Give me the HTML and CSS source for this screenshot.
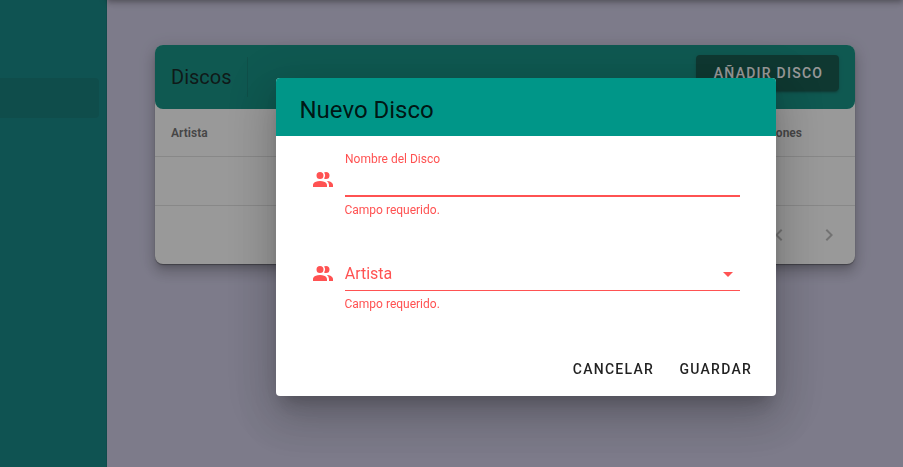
FILE: index.html
```html
<!DOCTYPE html>
<html lang="es">
<head>
<meta charset="utf-8">
<title>Discos</title>
<link rel="stylesheet" href="styles.css">
</head>
<body>
<div class="app">
  <nav class="sidebar"><div class="nav-item"></div></nav>
  <main class="content">
    <div class="app-bar"></div>
    <section class="card">
      <header class="toolbar">
        <h1 class="toolbar-title">Discos</h1>
        <span class="divider"></span>
        <button class="btn btn-add">Añadir Disco</button>
      </header>
      <div class="row head"><span>Artista</span><span class="actions">Acciones</span></div>
      <div class="row body-row"></div>
      <footer class="pager">
        <svg class="icon" viewBox="0 0 24 24"><path d="M15.41 16.58L10.83 12l4.58-4.59L14 6l-6 6 6 6z"/></svg>
        <svg class="icon" viewBox="0 0 24 24"><path d="M8.59 16.58L13.17 12 8.59 7.41 10 6l6 6-6 6z"/></svg>
      </footer>
    </section>
  </main>
</div>
<div class="scrim">
  <div class="dialog" role="dialog">
    <h2 class="dialog-title">Nuevo Disco</h2>
    <form class="form">
      <div class="field">
        <svg class="field-icon" viewBox="0 0 24 24"><path d="M16 17v2H2v-2s0-4 7-4 7 4 7 4m-3.500-9.500A3.500 3.500 0 1 0 9 11a3.500 3.500 0 0 0 3.500-3.500m3.440 5.500A5.320 5.320 0 0 1 18 17v2h4v-2s0-3.630-6.060-4M15 4a3.390 3.390 0 0 0-1.930.590 5 5 0 0 1 0 5.820A3.390 3.390 0 0 0 15 11a3.500 3.500 0 0 0 0-7z"/></svg>
        <div class="control">
          <label class="label-small">Nombre del Disco</label>
          <div class="line thick"></div>
          <p class="message">Campo requerido.</p>
        </div>
      </div>
      <div class="field">
        <svg class="field-icon" viewBox="0 0 24 24"><path d="M16 17v2H2v-2s0-4 7-4 7 4 7 4m-3.500-9.500A3.500 3.500 0 1 0 9 11a3.500 3.500 0 0 0 3.500-3.500m3.440 5.500A5.320 5.320 0 0 1 18 17v2h4v-2s0-3.630-6.060-4M15 4a3.390 3.390 0 0 0-1.930.590 5 5 0 0 1 0 5.820A3.390 3.390 0 0 0 15 11a3.500 3.500 0 0 0 0-7z"/></svg>
        <div class="control">
          <div class="line select"><span>Artista</span><svg class="icon" viewBox="0 0 24 24"><path d="M7 10l5 5 5-5z"/></svg></div>
          <p class="message">Campo requerido.</p>
        </div>
      </div>
    </form>
    <div class="dialog-actions">
      <button class="btn btn-text">Cancelar</button>
      <button class="btn btn-text">Guardar</button>
    </div>
  </div>
</div>
</body>
</html>
```
FILE: styles.css
```css
* { box-sizing: border-box; }
body {
  margin: 0;
  height: 467px;
  overflow: hidden;
  font-family: Roboto, "Liberation Sans", sans-serif;
  color: rgba(0, 0, 0, .87);
}
h1, h2, p { margin: 0; font-weight: 400; }
.app { display: flex; height: 467px; background: #cbc8e3; }
.sidebar { width: 107px; padding: 78px 7px 0 0; background: #007e7c; border-right: 1px solid #007270; }
.nav-item { height: 40px; background: #007370; border-radius: 0 4px 4px 0; }
.content { flex: 1; padding-right: 48px; padding-left: 48px; }
.app-bar {
  height: 64px;
  margin: -64px -48px 45px;
  box-shadow: 0 2px 4px -1px rgba(0, 0, 0, .2), 0 4px 5px rgba(0, 0, 0, .14), 0 1px 10px rgba(0, 0, 0, .12);
}
.card {
  width: 700px;
  height: 219px;
  border-radius: 8px;
  background: #fff;
  box-shadow: 0 1px 1px rgba(0, 0, 0, .35), 0 5px 6px -3px rgba(0, 0, 0, .2), 0 9px 12px 1px rgba(0, 0, 0, .14), 0 3px 16px 2px rgba(0, 0, 0, .12);
}
.toolbar { display: flex; align-items: center; height: 64px; padding: 0 16px; border-radius: 8px; background: #00897b; }
.toolbar-title { width: 76px; font-size: 20px; line-height: 30px; }
.divider { width: 1px; height: 40px; background: rgba(0, 0, 0, .12); }
.btn {
  height: 36px;
  padding: 0 16px;
  border: 0;
  border-radius: 4px;
  font: 500 14px/36px Roboto, "Liberation Sans", sans-serif;
  letter-spacing: 1.25px;
  text-transform: uppercase;
  white-space: nowrap;
}
.btn-add {
  width: 143px;
  padding: 0 15px 0 17px;
  margin: -8px 0 0 auto;
  color: #fff;
  background: #004d40;
  box-shadow: 0 3px 1px -2px rgba(0, 0, 0, .2), 0 2px 2px rgba(0, 0, 0, .14), 0 1px 5px rgba(0, 0, 0, .12);
}
.row {
  display: flex;
  align-items: center;
  height: 48px;
  padding: 0 16px;
  border-bottom: 1px solid rgba(0, 0, 0, .12);
  font-size: 12px;
  font-weight: 700;
  color: rgba(0, 0, 0, .6);
}
.actions { margin-left: auto; margin-right: 37px; }
.body-row { height: 49px; }
.pager { display: flex; justify-content: flex-end; align-items: center; gap: 26px; height: 58px; padding-right: 14px; color: rgba(0, 0, 0, .28); }
.icon { width: 24px; height: 24px; fill: currentColor; }
.scrim {
  position: fixed;
  inset: 0;
  padding: 78px 0 0 276px;
  background: rgba(33, 33, 33, .46);
}
.dialog {
  width: 500px;
  height: 318px;
  border-radius: 4px;
  overflow: hidden;
  background: #fff;
  box-shadow: 0 11px 15px -7px rgba(0, 0, 0, .2), 0 24px 38px 3px rgba(0, 0, 0, .14), 0 9px 46px 8px rgba(0, 0, 0, .12);
}
.dialog-title { height: 58px; padding: 16px 24px 10px 23.5px; background: #009688; font-size: 24px; line-height: 32px; }
.form { height: 206px; padding: 14px 36px 0 35px; color: #ff5252; }
.field { display: flex; gap: 10px; height: 94px; }
.field-icon { flex: none; width: 24px; height: 24px; margin-top: 18px; fill: currentColor; }
.control { flex: 1; }
.label-small { display: block; height: 18px; font-size: 12px; line-height: 18px; }
.line { border-bottom: 1px solid currentColor; }
.thick { height: 29px; border-bottom-width: 2px; }
.message { margin: 7px 0 0 -.5px; font-size: 12px; line-height: 12px; }
.select { display: flex; align-items: center; justify-content: space-between; height: 47px; padding-top: 14px; font-size: 16px; line-height: 20px; }
.select span { margin-left: -.3px; }
.dialog-actions { display: flex; justify-content: flex-end; gap: 7.5px; padding: 9px 8px 0; }
.btn-text { padding: 0 9px; background: none; color: rgba(0, 0, 0, .87); }
.dialog-actions .btn-text + .btn-text { padding-right: 16px; }
```
